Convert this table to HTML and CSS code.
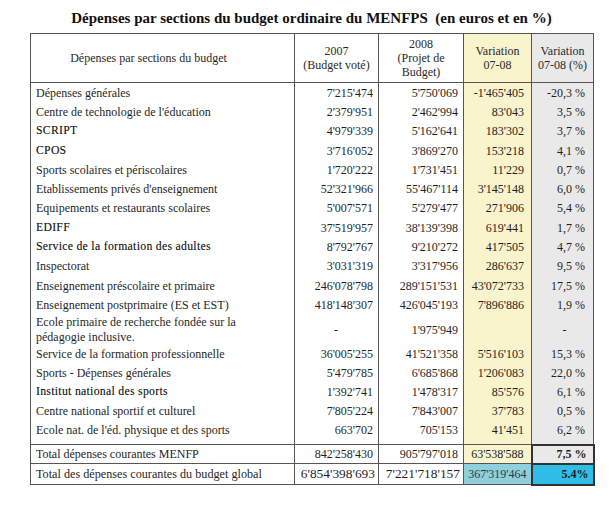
FILE: index.html
```html
<!DOCTYPE html>
<html lang="fr">
<head>
<meta charset="utf-8">
<title>Dépenses par sections du budget</title>
<link rel="stylesheet" href="styles.css">
</head>
<body>
<div class="page">
  <h1 class="title">Dépenses par sections du budget ordinaire du MENFPS&nbsp; (en euros et en %)</h1>
  <table class="budget">
    <colgroup>
      <col class="c-label"><col class="c-num"><col class="c-num2"><col class="c-var"><col class="c-pct">
    </colgroup>
    <thead>
      <tr>
        <th class="h-label">Dépenses par sections du budget</th>
        <th>2007<br>(Budget voté)</th>
        <th>2008<br>(Projet de<br>Budget)</th>
        <th class="var">Variation<br>07-08</th>
        <th class="pct">Variation<br>07-08 (%)</th>
      </tr>
    </thead>
    <tbody class="rows">
      <tr><td class="lbl">Dépenses générales</td><td>7'215'474</td><td>5'750'069</td><td class="var">-1'465'405</td><td class="pct">-20,3 %</td></tr>
      <tr><td class="lbl">Centre de technologie de l'éducation</td><td>2'379'951</td><td>2'462'994</td><td class="var">83'043</td><td class="pct">3,5 %</td></tr>
      <tr><td class="lbl alt">SCRIPT</td><td>4'979'339</td><td>5'162'641</td><td class="var">183'302</td><td class="pct">3,7 %</td></tr>
      <tr><td class="lbl alt">CPOS</td><td>3'716'052</td><td>3'869'270</td><td class="var">153'218</td><td class="pct">4,1 %</td></tr>
      <tr><td class="lbl">Sports scolaires et périscolaires</td><td>1'720'222</td><td>1'731'451</td><td class="var">11'229</td><td class="pct">0,7 %</td></tr>
      <tr><td class="lbl">Etablissements privés d'enseignement</td><td>52'321'966</td><td>55'467'114</td><td class="var">3'145'148</td><td class="pct">6,0 %</td></tr>
      <tr><td class="lbl">Equipements et restaurants scolaires</td><td>5'007'571</td><td>5'279'477</td><td class="var">271'906</td><td class="pct">5,4 %</td></tr>
      <tr><td class="lbl alt">EDIFF</td><td>37'519'957</td><td>38'139'398</td><td class="var">619'441</td><td class="pct">1,7 %</td></tr>
      <tr><td class="lbl alt">Service de la formation des adultes</td><td>8'792'767</td><td>9'210'272</td><td class="var">417'505</td><td class="pct">4,7 %</td></tr>
      <tr><td class="lbl">Inspectorat</td><td>3'031'319</td><td>3'317'956</td><td class="var">286'637</td><td class="pct">9,5 %</td></tr>
      <tr><td class="lbl">Enseignement préscolaire et primaire</td><td>246'078'798</td><td>289'151'531</td><td class="var">43'072'733</td><td class="pct">17,5 %</td></tr>
      <tr><td class="lbl">Enseignement postprimaire (ES et EST)</td><td>418'148'307</td><td>426'045'193</td><td class="var">7'896'886</td><td class="pct">1,9 %</td></tr>
      <tr class="tall"><td class="lbl multi">Ecole primaire de recherche fondée sur la pédagogie inclusive.</td><td class="dash">-</td><td>1'975'949</td><td class="var"></td><td class="pct dash">-</td></tr>
      <tr class="low"><td class="lbl">Service de la formation professionnelle</td><td>36'005'255</td><td>41'521'358</td><td class="var">5'516'103</td><td class="pct">15,3 %</td></tr>
      <tr class="low"><td class="lbl">Sports - Dépenses générales</td><td>5'479'785</td><td>6'685'868</td><td class="var">1'206'083</td><td class="pct">22,0 %</td></tr>
      <tr class="low"><td class="lbl alt">Institut national des sports</td><td>1'392'741</td><td>1'478'317</td><td class="var">85'576</td><td class="pct">6,1 %</td></tr>
      <tr class="low"><td class="lbl">Centre national sportif et culturel</td><td>7'805'224</td><td>7'843'007</td><td class="var">37'783</td><td class="pct">0,5 %</td></tr>
      <tr class="last"><td class="lbl">Ecole nat. de l'éd. physique et des sports</td><td>663'702</td><td>705'153</td><td class="var">41'451</td><td class="pct">6,2 %</td></tr>
    </tbody>
    <tbody class="totals">
      <tr class="t1"><td class="lbl">Total dépenses courantes MENFP</td><td>842'258'430</td><td>905'797'018</td><td class="var">63'538'588</td><td class="pct strong">7,5 %</td></tr>
      <tr class="t2"><td class="lbl">Total des dépenses courantes du budget global</td><td class="big">6'854'398'693</td><td class="big">7'221'718'157</td><td class="var blue">367'319'464</td><td class="pct strong cyan">5.4%</td></tr>
    </tbody>
  </table>
</div>
</body>
</html>
```
FILE: styles.css
```css
html, body {
  margin: 0;
  padding: 0;
  background: #ffffff;
}

body {
  font-family: "Liberation Serif", "Times New Roman", serif;
  color: #1f1f1f;
}

.page {
  padding: 9px 0 0 30px;
  width: 563px;
}

.title {
  margin: 0 0 6px 0;
  font-size: 15px;
  line-height: 18px;
  font-weight: bold;
  text-align: center;
  color: #111;
  white-space: nowrap;
}

.budget {
  width: 563px;
  border-collapse: collapse;
  table-layout: fixed;
  font-size: 12px;
  border: 1px solid #555;
}

.c-label { width: 264px; }
.c-num { width: 84px; }
.c-num2 { width: 85px; }
.c-var { width: 68px; }
.c-pct { width: 62px; }

.budget th {
  font-weight: normal;
  font-size: 12px;
  line-height: 14px;
  height: 48px;
  padding: 0 2px;
  text-align: center;
  vertical-align: middle;
  border: 1px solid #555;
  color: #2a2a2a;
}

.budget th.h-label {
  padding-right: 30px;
}

.budget td {
  height: 19.3px;
  padding: 0 5px 0 4px;
  text-align: right;
  vertical-align: middle;
  line-height: 14px;
  border-left: 1px solid #555;
  border-right: 1px solid #555;
  white-space: nowrap;
}

.budget td.lbl {
  text-align: left;
  padding-left: 5px;
}

.budget td.alt {
  font-size: 11.6px;
  letter-spacing: 0.35px;
  color: #161616;
  text-shadow: 0.25px 0 0 rgba(0, 0, 0, 0.35);
}

.budget td.multi {
  white-space: normal;
  line-height: 15px;
  padding-right: 30px;
}

.budget tr.tall td {
  height: 30px;
}

.budget tr.low td {
  height: 19px;
}

.budget td.dash {
  text-align: center;
}

.budget tr.last td {
  height: 21px;
  vertical-align: top;
  padding-top: 2px;
}

.var {
  background: #faf4cc;
}

.pct {
  background: #e9e9e9;
}

.budget td.var {
  padding-right: 7px;
}

.budget td.pct {
  padding-right: 8px;
}

.budget td.pct.dash {
  text-align: center;
  padding-right: 0;
}

.totals tr td {
  border: 1px solid #555;
}

.totals tr.t1 td {
  height: 17px;
}

.totals tr.t2 td {
  height: 19px;
  padding-right: 4px;
  padding-left: 4px;
}

.totals tr.t2 td.lbl {
  font-size: 12.2px;
  padding-left: 5px;
}

.totals tr.t2 td.big {
  font-size: 13.4px;
  padding-right: 3px;
}

.budget td.strong {
  font-weight: bold;
  border: 2px solid #333;
  padding-right: 6px;
}

.budget td.blue {
  background: #8fd0dd;
  font-size: 12px;
  color: #2c3c44;
}

.budget td.cyan {
  background: #30bde8;
  font-size: 12px;
}
```
